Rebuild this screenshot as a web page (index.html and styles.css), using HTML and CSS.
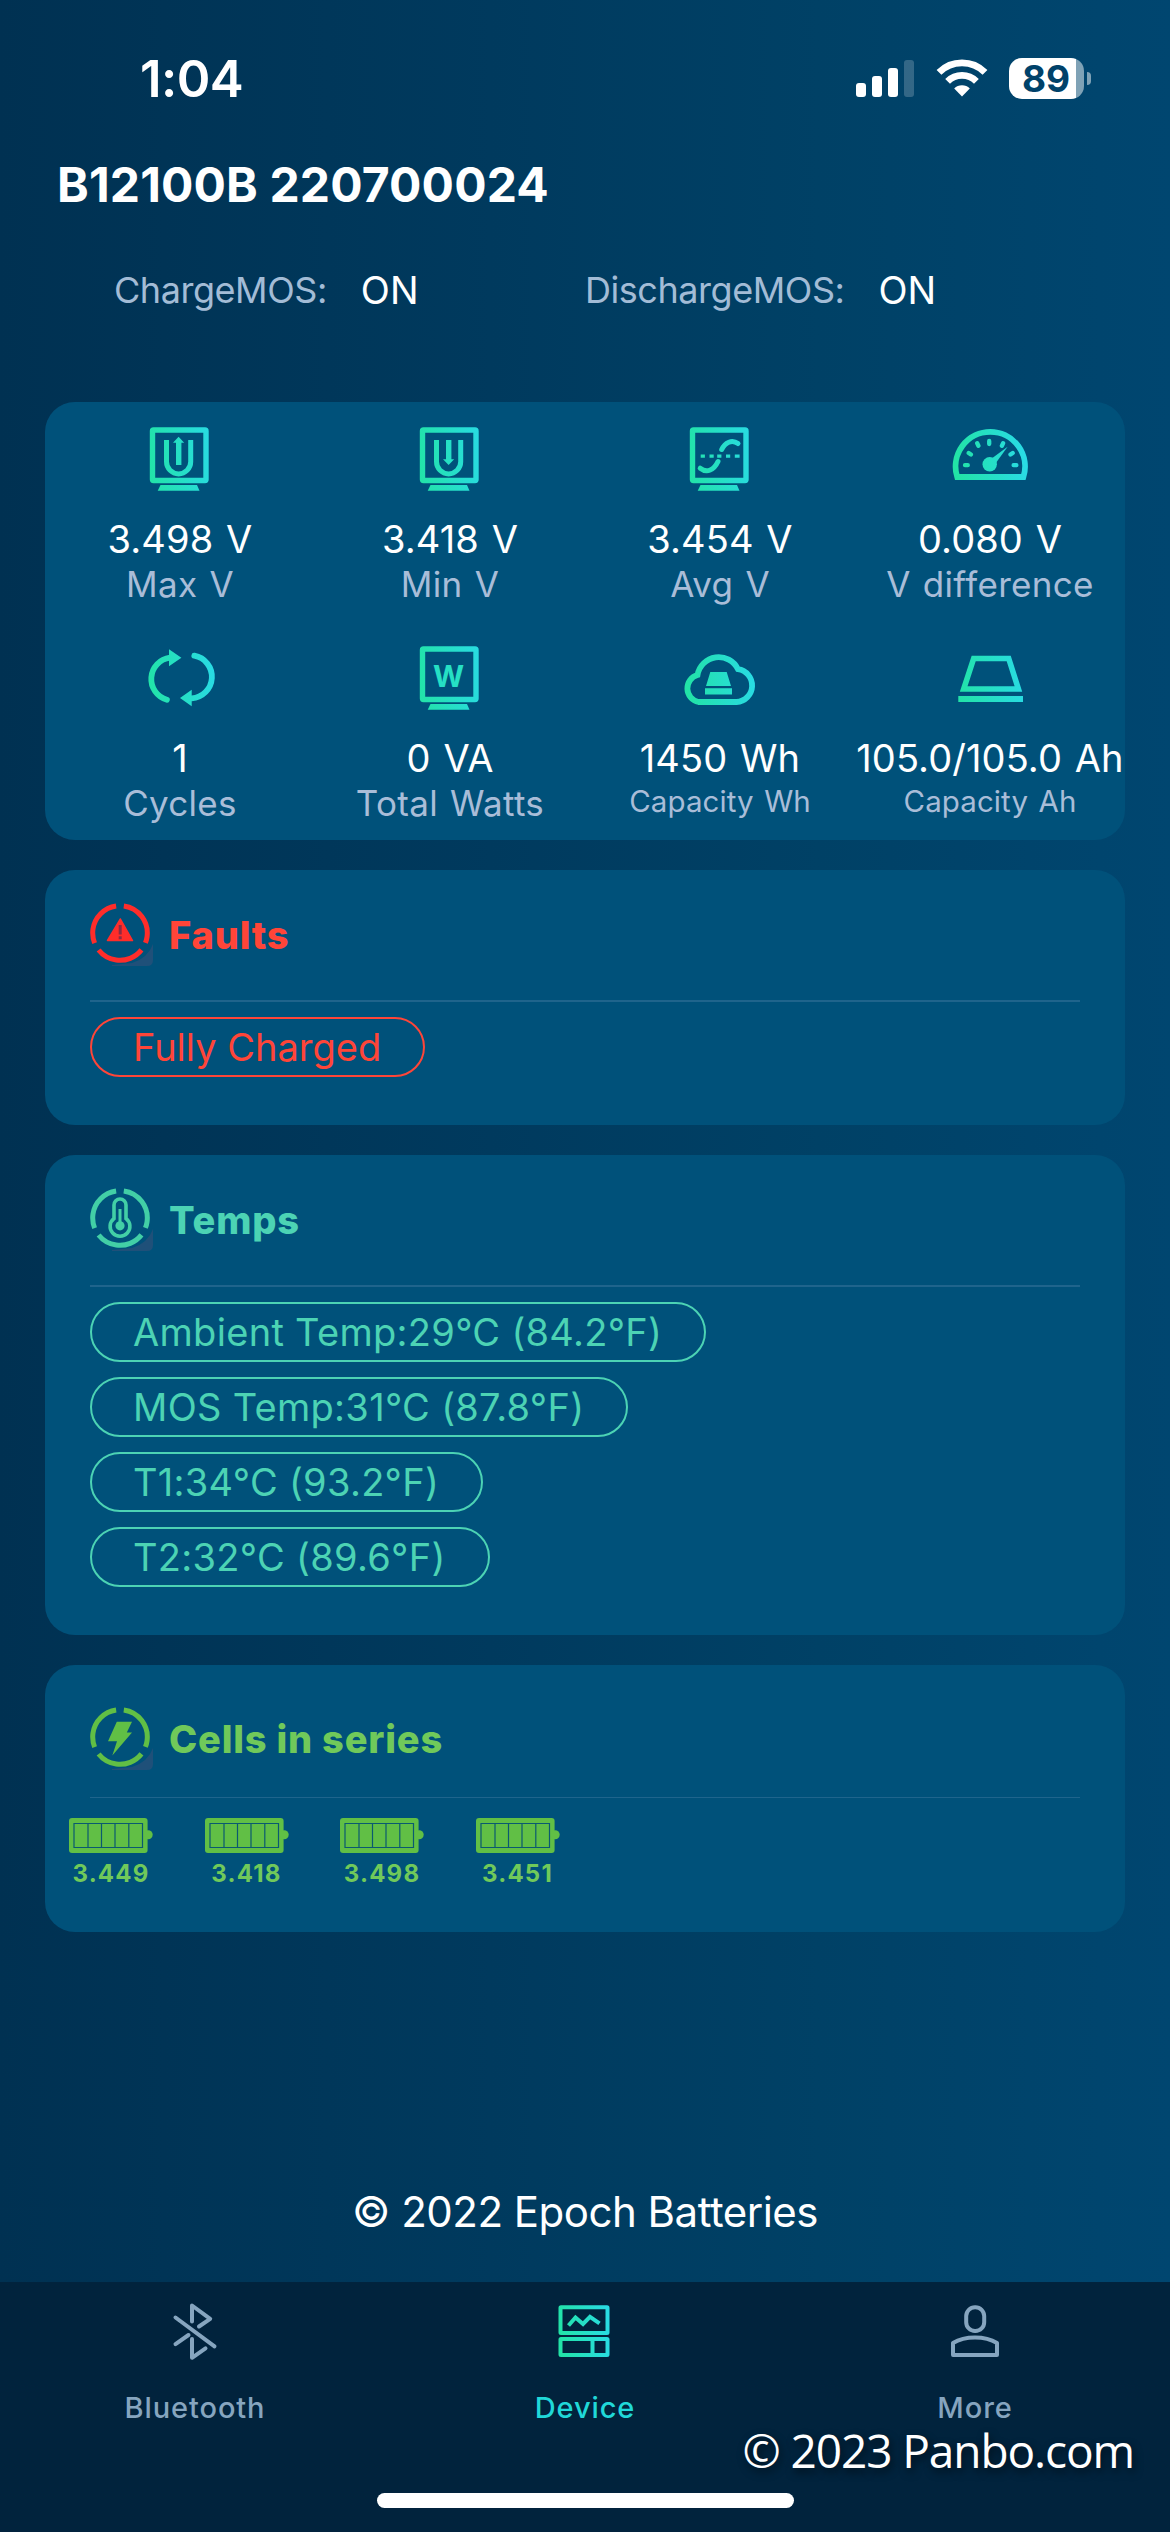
FILE: index.html
```html
<!DOCTYPE html>
<html lang="en">
<head>
  <meta charset="UTF-8">
  <meta name="viewport" content="width=device-width, initial-scale=1.0">
  <title>Device</title>
  <link rel="stylesheet" href="styles.css">
</head>
<body>
  <!-- shared gradient and symbols -->
  <svg class="defs" width="0" height="0">
    <defs>
      <linearGradient id="mint" gradientUnits="userSpaceOnUse" x1="8" y1="45" x2="76" y2="38">
        <stop offset="0" stop-color="#22e3a6"/>
        <stop offset="1" stop-color="#29dbe4"/>
      </linearGradient>
      <linearGradient id="mintSmall" gradientUnits="userSpaceOnUse" x1="3" y1="34" x2="55" y2="28">
        <stop offset="0" stop-color="#22e3a6"/>
        <stop offset="1" stop-color="#29dbe4"/>
      </linearGradient>
      <symbol id="screen" viewBox="0 0 84 84">
        <rect x="14.5" y="13" width="53.5" height="50.5" rx="1" fill="none" stroke="url(#mint)" stroke-width="5.4"/>
        <path d="M22.5 68H59L61.5 73.7H19.7Z" fill="url(#mint)"/>
      </symbol>
      <symbol id="ring" viewBox="0 0 66 66">
        <path d="M22 63H57Q63 63 63 57V41Q58 55 42 60L22 62Z" class="ring-corner"/>
        <circle cx="30" cy="30" r="27.3" fill="none" stroke="currentColor" stroke-width="5" stroke-dasharray="49.2 7.97" transform="rotate(-82 30 30)"/>
      </symbol>
      <symbol id="cell" viewBox="0 0 84 35">
        <rect width="78.6" height="35" rx="3" fill="#61bf45"/>
        <circle cx="79.2" cy="16.8" r="4.5" fill="#61bf45"/>
        <path d="M5 5.5H73.5V29.5H5ZM19 5.5V29.5M32.5 5.5V29.5M46 5.5V29.5M59.8 5.5V29.5" fill="none" stroke="#0a5a70" stroke-width="1.2"/>
      </symbol>
    </defs>
  </svg>

  <div class="phone">
    <div class="status-bar">
      <div class="time">1:04</div>
      <div class="status-icons">
        <div class="signal"><i></i><i></i><i></i><i></i></div>
        <svg class="wifi" width="52" height="38" viewBox="0 0 52 38">
          <g fill="none" stroke="#fff" stroke-width="6.8">
            <path d="M3 13.3A32.6 32.6 0 0 1 49 13.3"/>
            <path d="M11.6 22.3A20.4 20.4 0 0 1 40.4 22.3"/>
          </g>
          <path d="M26 37.5L18.2 29.4A11 11 0 0 1 33.8 29.4Z" fill="#fff"/>
        </svg>
        <div class="battery"><span>89</span></div>
        <div class="battery-knob"></div>
      </div>
    </div>

    <h1 class="title">B12100B 220700024</h1>

    <div class="mos">
      <div class="mos-item"><span class="mos-label">ChargeMOS:</span><span class="mos-value">ON</span></div>
      <div class="mos-item"><span class="mos-label">DischargeMOS:</span><span class="mos-value">ON</span></div>
    </div>

    <div class="card metrics">
      <div class="metric">
        <svg viewBox="0 0 84 84">
          <use href="#screen"/>
          <path d="M28.5 23V44.8A12 12 0 0 0 52.7 44.8V23" fill="none" stroke="url(#mint)" stroke-width="5"/>
          <path d="M40.6 19.7L46.2 25.8H43.4V48H38V25.8H35Z" fill="url(#mint)"/>
        </svg>
        <div class="value">3.498 V</div>
        <div class="label">Max V</div>
      </div>
      <div class="metric">
        <svg viewBox="0 0 84 84">
          <use href="#screen"/>
          <path d="M28.5 23V44.8A12 12 0 0 0 52.7 44.8V23" fill="none" stroke="url(#mint)" stroke-width="5"/>
          <path d="M40.6 48L46.2 42.2H43.4V23H38V42.2H35Z" fill="url(#mint)"/>
        </svg>
        <div class="value">3.418 V</div>
        <div class="label">Min V</div>
      </div>
      <div class="metric">
        <svg viewBox="0 0 84 84">
          <use href="#screen"/>
          <path d="M22.7 37.4h4.2v3.4h-4.2zM31.5 37.4h4.2v3.4h-4.2zM39.2 37.4h4.2v3.4h-4.2zM48 37.4h4.2v3.4h-4.2zM56.8 37.4h4.8v3.4h-4.8z" fill="url(#mint)"/>
          <g fill="none" stroke="url(#mint)" stroke-width="5" stroke-linecap="round">
            <path d="M43.7 32.5C47 25.5 54 22 60 26.6"/>
            <path d="M22.2 51.2C29 56.5 36 53 40 44.5"/>
          </g>
        </svg>
        <div class="value">3.454 V</div>
        <div class="label">Avg V</div>
      </div>
      <div class="metric">
        <svg viewBox="0 0 84 84">
          <path d="M9.2 60A34.7 34.7 0 1 1 75.4 60Z" fill="none" stroke="url(#mint)" stroke-width="5.8"/>
          <path d="M17 48.2H19.8M20.7 36L22.9 37.5M29.2 26.2L30.4 28.7M41.2 24V27M55.1 26.2L53.9 28.7M64.7 36L62.5 37.5M65.6 48.2H68.4" fill="none" stroke="url(#mint)" stroke-width="4.3" stroke-linecap="round"/>
          <circle cx="41.7" cy="47.3" r="7.2" fill="url(#mint)"/>
          <path d="M59.6 29.8L47.5 46.5L43 42Z" fill="url(#mint)"/>
        </svg>
        <div class="value">0.080 V</div>
        <div class="label">V difference</div>
      </div>
      <div class="metric">
        <svg viewBox="0 0 84 84">
          <g fill="none" stroke="url(#mint)" stroke-width="5.8" stroke-linecap="round">
            <path d="M28.9 63.7A21.5 21.5 0 0 1 32 21.7"/>
            <path d="M56.3 19.7A21.5 21.5 0 0 1 53.7 62.3"/>
          </g>
          <path d="M31 13.3L43.4 21.8L31 30.3ZM53.7 53.7L42 62L53.7 70.3Z" fill="url(#mint)"/>
        </svg>
        <div class="value">1</div>
        <div class="label">Cycles</div>
      </div>
      <div class="metric">
        <svg viewBox="0 0 84 84">
          <use href="#screen"/>
          <text x="40.6" y="50.6" class="watt">W</text>
        </svg>
        <div class="value">0 VA</div>
        <div class="label">Total Watts</div>
      </div>
      <div class="metric">
        <svg viewBox="0 0 84 84">
          <path d="M20.5 66H58.5A16.5 16.5 0 0 0 60 33.2A21.5 21.5 0 0 0 19.5 39A13.9 13.9 0 0 0 20.5 66Z" fill="none" stroke="url(#mint)" stroke-width="5.8"/>
          <path d="M32.3 36H48.7L53 50H28ZM27 52.3H54V58.6H27Z" fill="url(#mint)"/>
        </svg>
        <div class="value">1450 Wh</div>
        <div class="label small">Capacity Wh</div>
      </div>
      <div class="metric">
        <svg viewBox="0 0 84 84">
          <path d="M25.7 22.5H60.7L70.4 53H15.7Z" fill="none" stroke="url(#mint)" stroke-width="5.6"/>
          <path d="M10.3 60H75V66H10.3Z" fill="url(#mint)"/>
        </svg>
        <div class="value">105.0/105.0 Ah</div>
        <div class="label small">Capacity Ah</div>
      </div>
    </div>

    <div class="card section faults">
      <div class="section-head">
        <svg viewBox="0 0 66 66">
          <use href="#ring" width="66" height="66"/>
          <path d="M30.4 16L42.5 37.5H17.5Z" fill="currentColor" stroke="currentColor" stroke-width="1.5" stroke-linejoin="round"/>
          <path d="M30.2 22V31.5M30.2 33.3V36.3" stroke="#8c2b44" stroke-width="3"/>
        </svg>
        <h2>Faults</h2>
      </div>
      <div class="pills">
        <span class="pill">Fully Charged</span>
      </div>
    </div>

    <div class="card section temps">
      <div class="section-head">
        <svg viewBox="0 0 66 66">
          <use href="#ring" width="66" height="66"/>
          <path d="M24 30.5V17A6 6 0 0 1 36 17V30.5A9.9 9.9 0 1 1 24 30.5Z" fill="none" stroke="currentColor" stroke-width="3.6"/>
          <path d="M30 21V37" stroke="currentColor" stroke-width="3"/>
          <circle cx="30" cy="37.8" r="4.6" fill="currentColor"/>
        </svg>
        <h2>Temps</h2>
      </div>
      <div class="pills">
        <span class="pill">Ambient Temp:29°C (84.2°F)</span>
        <span class="pill">MOS Temp:31°C (87.8°F)</span>
        <span class="pill">T1:34°C (93.2°F)</span>
        <span class="pill">T2:32°C (89.6°F)</span>
      </div>
    </div>

    <div class="card section cells">
      <div class="section-head">
        <svg viewBox="0 0 66 66">
          <use href="#ring" width="66" height="66"/>
          <path d="M26.8 14.7H42L36.8 25.6H42L22.3 48.5L27 34.2H18Z" fill="currentColor"/>
        </svg>
        <h2>Cells in series</h2>
      </div>
      <div class="cell-list">
        <div class="cell"><svg viewBox="0 0 84 35"><use href="#cell"/></svg><span>3.449</span></div>
        <div class="cell"><svg viewBox="0 0 84 35"><use href="#cell"/></svg><span>3.418</span></div>
        <div class="cell"><svg viewBox="0 0 84 35"><use href="#cell"/></svg><span>3.498</span></div>
        <div class="cell"><svg viewBox="0 0 84 35"><use href="#cell"/></svg><span>3.451</span></div>
      </div>
    </div>

    <div class="copyright">© 2022 Epoch Batteries</div>

    <div class="tab-bar">
      <div class="tabs">
        <div class="tab">
          <svg viewBox="0 0 60 60" fill="none" stroke="currentColor" stroke-width="4" stroke-linecap="round" stroke-linejoin="round">
            <path d="M27 20.5V4.5L45.2 17.8L34 25.5M10.5 16.5L49.5 45.3M10.5 43.2L23.5 34M27 38V56.8L40.5 47.3"/>
          </svg>
          <span>Bluetooth</span>
        </div>
        <div class="tab active">
          <svg viewBox="0 0 60 60" fill="none" stroke="url(#mintSmall)" stroke-width="4">
            <rect x="5.5" y="6.3" width="47" height="25.7" rx="0.5"/>
            <rect x="5.5" y="38" width="47" height="16" rx="0.5"/>
            <path d="M37.5 37V54M13.5 24.5L20.5 16.5L28 23L35 15.8L44.5 22.3"/>
          </svg>
          <span>Device</span>
        </div>
        <div class="tab">
          <svg viewBox="0 0 60 60" fill="none" stroke="currentColor" stroke-width="4" stroke-linejoin="round">
            <rect x="21.2" y="6.3" width="18" height="23.7" rx="8.8"/>
            <path d="M8 54V42Q17 36.5 30 36.5T52 42V54Z"/>
          </svg>
          <span>More</span>
        </div>
      </div>
      <div class="home-bar"></div>
      <div class="watermark">© 2023 Panbo.com</div>
    </div>
  </div>
</body>
</html>
```
FILE: styles.css
```css
* {
  margin: 0;
  padding: 0;
  box-sizing: border-box;
}
body {
  font-family: Inter, "Liberation Sans", sans-serif;
  color: #fff;
  background: #01233d;
}
.defs {
  position: absolute;
}
.phone {
  width: 1170px;
  height: 2532px;
  display: flex;
  flex-direction: column;
  overflow: hidden;
  background: linear-gradient(90deg, #003152 0%, #003a5e 42%, #004166 70%, #004670 100%);
}

/* status bar */
.status-bar {
  height: 156px;
  padding: 0 79px 0 140px;
  display: flex;
  align-items: center;
  justify-content: space-between;
}
.time {
  font-size: 51px;
  font-weight: 600;
  letter-spacing: -0.6px;
}
.status-icons {
  display: flex;
  align-items: center;
}
.signal {
  display: flex;
  align-items: flex-end;
  gap: 6px;
  height: 37px;
  margin-right: 22px;
}
.signal i {
  width: 10px;
  height: 14px;
  border-radius: 3px;
  background: #fff;
}
.signal i:nth-child(2) {
  height: 21px;
}
.signal i:nth-child(3) {
  height: 29px;
}
.signal i:nth-child(4) {
  height: 37px;
  opacity: 0.2;
}
.wifi {
  margin-right: 21px;
}
.battery {
  width: 75px;
  height: 41px;
  border-radius: 13px;
  background: linear-gradient(90deg, #fff 67px, #7fa2b6 67px);
  color: #00426a;
  font-size: 37px;
  font-weight: 700;
  line-height: 41px;
  padding-right: 1px;
  text-align: center;
}
.battery-knob {
  width: 4px;
  height: 13px;
  margin-left: 3px;
  border-radius: 0 4px 4px 0;
  background: #7fa2b6;
}

/* header */
.title {
  padding-left: 57px;
  font-size: 48px;
  font-weight: 700;
  line-height: 58px;
  letter-spacing: 0.15px;
}
.mos {
  display: grid;
  grid-template-columns: 471px 1fr;
  margin: 46px 0 82px;
  padding-left: 114px;
}
.mos-item {
  display: flex;
  align-items: center;
  height: 60px;
}
.mos-label {
  color: #a3bcd6;
  font-size: 36px;
  letter-spacing: -0.45px;
  margin-right: 34px;
}
.mos-value {
  font-size: 38px;
}

/* cards */
.card {
  margin: 0 45px 30px;
  border-radius: 30px;
  background: #00517a;
}
.metrics {
  display: grid;
  grid-template-columns: repeat(4, 270px);
  grid-auto-rows: 219px;
}
.metric {
  display: flex;
  flex-direction: column;
  align-items: center;
  padding-top: 15px;
  white-space: nowrap;
}
.metric svg {
  width: 84px;
  height: 84px;
  margin-bottom: 15px;
}
.watt {
  font-size: 30px;
  font-weight: 700;
  fill: #26e0c4;
  text-anchor: middle;
}
.value {
  font-size: 38px;
  line-height: 46px;
  letter-spacing: 0.1px;
  word-spacing: 2px;
}
.label {
  color: #a9bdd8;
  font-size: 35px;
  line-height: 44px;
  letter-spacing: 0.3px;
  word-spacing: 2px;
}
.label.small {
  font-size: 29.5px;
  line-height: 41px;
  letter-spacing: 0.1px;
}

.section {
  padding: 33px 45px 48px;
}
.section-head {
  display: flex;
  height: 99px;
  border-bottom: 2px solid #1f648c;
}
.section-head svg {
  width: 66px;
  height: 66px;
  margin-right: 13px;
}
.section-head h2 {
  font-size: 38px;
  font-weight: 800;
  line-height: 65px;
  letter-spacing: 0.8px;
}
.ring-corner {
  fill: #1f5079;
}
.pills {
  display: flex;
  flex-direction: column;
  align-items: flex-start;
  gap: 15px;
  padding-top: 15px;
}
.pill {
  height: 60px;
  padding: 0 42px 0 41px;
  border: 2px solid currentColor;
  border-radius: 30px;
  font-size: 38px;
  line-height: 57px;
  letter-spacing: 0.3px;
}
.faults {
  color: #ff4538;
}
.faults svg {
  color: #ff2d2a;
}
.faults .pill {
  letter-spacing: 0;
}
.temps {
  color: #4cd3b4;
}
.temps svg {
  color: #42cfa6;
}
.cells {
  height: 267px;
  padding-top: 42px;
  color: #70c95a;
}
.cells svg {
  color: #61bf45;
}
.cells .section-head {
  height: 91px;
  border-bottom-width: 1px;
}
.cell-list {
  display: flex;
  gap: 51.5px;
  margin-left: -21px;
  padding-top: 20px;
}
.cell {
  width: 84px;
  display: flex;
  flex-direction: column;
}
.cell svg {
  width: 84px;
  height: 35px;
}
.cell span {
  width: 84px;
  margin-top: 5px;
  font-size: 24px;
  font-weight: 700;
  line-height: 31px;
  letter-spacing: 1.2px;
  text-align: center;
}

.copyright {
  margin-top: auto;
  margin-bottom: 40px;
  font-size: 42px;
  line-height: 60px;
  letter-spacing: -0.5px;
  text-align: center;
}

/* bottom tabs */
.tab-bar {
  position: relative;
  height: 250px;
  background: #01233d;
}
.tabs {
  display: grid;
  grid-template-columns: repeat(3, 1fr);
  height: 211px;
  padding-top: 19px;
}
.tab {
  display: flex;
  flex-direction: column;
  align-items: center;
  color: #86a5bf;
}
.tab svg {
  width: 60px;
  height: 60px;
}
.tab span {
  margin-top: 30px;
  font-size: 29px;
  font-weight: 500;
  line-height: 34px;
  letter-spacing: 0.9px;
}
.tab.active {
  color: #20d8d8;
}
.home-bar {
  width: 417px;
  height: 15px;
  margin: 0 auto;
  border-radius: 8px;
  background: #fff;
}
.watermark {
  position: absolute;
  right: 36px;
  top: 146px;
  font-family: "Open Sans", "Noto Sans", sans-serif;
  font-size: 46px;
  line-height: 44px;
  letter-spacing: -1.1px;
  text-shadow: 2px 4px 8px rgba(0, 0, 0, 0.6);
}
```
